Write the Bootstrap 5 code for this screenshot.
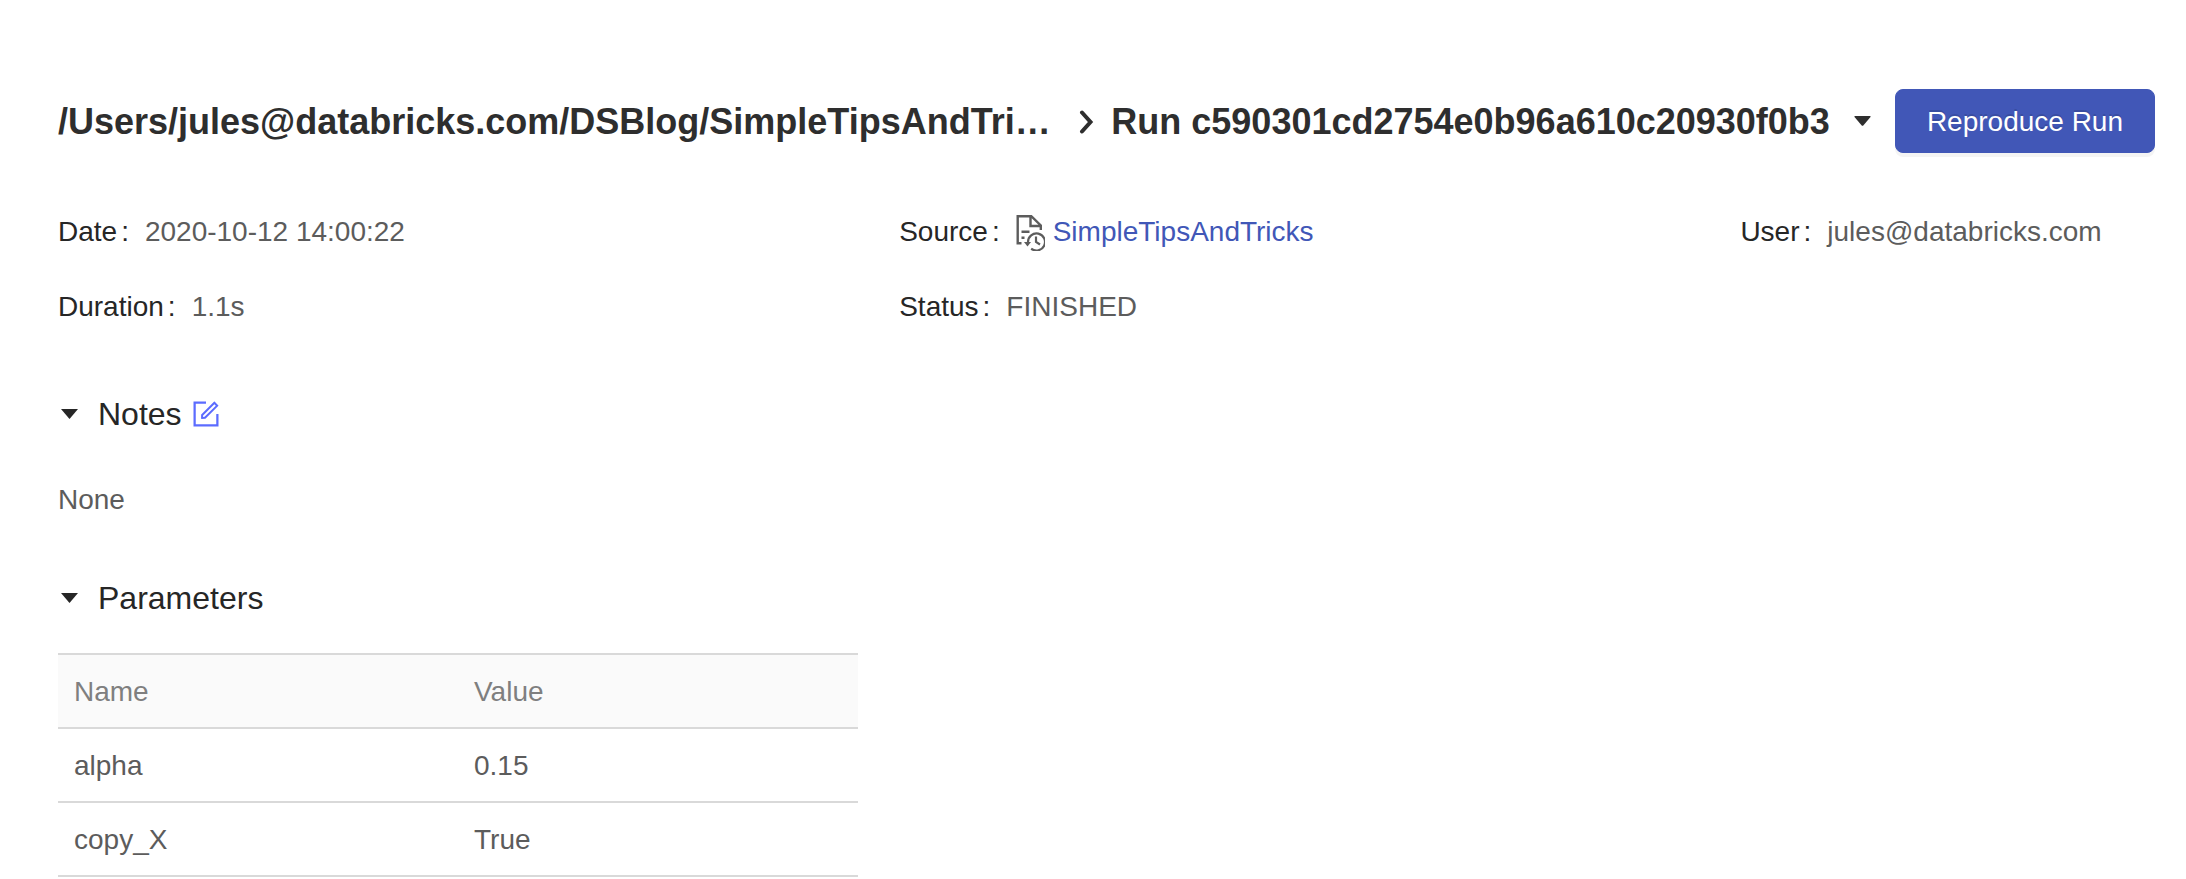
<!DOCTYPE html>
<html lang="en">
<head>
<meta charset="utf-8">
<meta name="viewport" content="width=device-width, initial-scale=1">
<title>Run c590301cd2754e0b96a610c20930f0b3</title>
<link href="https://cdn.jsdelivr.net/npm/bootstrap@5.3.0/dist/css/bootstrap.min.css" rel="stylesheet">
<style>
  body { font-family: "Liberation Sans", Arial, sans-serif; font-size: 28px; line-height: 42px; color: #5c5c5c; background: #fff; }
  .run-page { padding: 89px 31px 0 58px; }
  .run-title { font-size: 36px; line-height: 54px; font-weight: 700; color: #2e2e2e; padding-top: 2px; }
  .run-path { color: inherit; text-decoration: none; min-width: 0; flex: 1 1 0; }
  .chevron { margin: 0 17px 0 24px; }
  .menu-toggle { padding: 0 24px; border: 0; background: none; color: #2e2e2e; line-height: 0; }
  .btn-reproduce { --bs-btn-color: #fff; --bs-btn-bg: #4157b7; --bs-btn-border-color: #4157b7; --bs-btn-hover-color: #fff; --bs-btn-hover-bg: #364aa3; --bs-btn-hover-border-color: #364aa3;
    --bs-btn-font-size: 28px; --bs-btn-line-height: 42px; --bs-btn-padding-x: 31px; --bs-btn-border-radius: 8px;
    padding-top: 11px; padding-bottom: 9px;
    text-shadow: 0 -2px 0 rgba(0,0,0,.12); box-shadow: 0 4px 0 rgba(0,0,0,.045); }
  .run-meta { display: grid; grid-template-columns: 2fr 2fr 1fr; gap: 33px 12px; margin: 58px 0 0; }
  .run-meta dt { font-weight: 400; color: #262626; }
  .run-meta dt::after { content: ":"; margin: 0 16px 0 4px; }
  .run-meta dd { margin: 0; white-space: nowrap; }
  .source-link { color: #4157b7; text-decoration: none; }
  .section-title { font-size: 32px; line-height: 48px; font-weight: 400; color: #262626; margin: 0; }
  .fold { padding: 0 20px 0 3px; border: 0; background: none; color: #262626; line-height: 0; }
  .edit-note { padding: 0; border: 0; background: none; color: #5c6cff; line-height: 0; margin-left: 10px; }
  .notes-section { margin-top: 62px; }
  .notes-body { margin: 41px 0 0; }
  .params-section { margin-top: 53px; }
  .params-table { max-width: 800px; table-layout: fixed; margin: 31px 0 0; color: #5c5c5c; border-color: #d9d9d9; --bs-table-color: #5c5c5c; }
  .params-table > :not(caption) > * > * { padding: 16px 16px 14px; border: 0 solid #d9d9d9; border-bottom-width: 2px; }
  .params-table > thead > tr > th { font-weight: 400; color: #7f7f7f; background: #fafafa; border-top-width: 2px; }
</style>
</head>
<body>
<main class="run-page">
  <header class="d-flex align-items-center">
    <h1 class="run-title d-flex align-items-center flex-fill m-0 text-nowrap overflow-hidden">
      <a class="run-path text-truncate" href="#">/Users/jules@databricks.com/DSBlog/SimpleTipsAndTri…</a>
      <svg class="chevron flex-shrink-0" width="15" height="24" viewBox="0 0 15 24" fill="none" stroke="currentColor" stroke-width="4" aria-hidden="true"><path d="M3 2.500l8.500 9.500L3 21.500" stroke-linecap="round"/></svg>
      <span>Run c590301cd2754e0b96a610c20930f0b3</span>
    </h1>
    <button class="menu-toggle" type="button" aria-label="Run actions"><svg width="17" height="10" viewBox="0 0 17 10" fill="currentColor"><path d="M1 0h15q1 0 .5 1L9.500 9.300q-1 1-2 0L.5 1Q0 0 1 0z"/></svg></button>
    <button class="btn btn-reproduce flex-shrink-0" type="button">Reproduce Run</button>
  </header>

  <dl class="run-meta">
    <div class="d-flex"><dt>Date</dt><dd>2020-10-12 14:00:22</dd></div>
    <div class="d-flex"><dt>Source</dt><dd class="d-flex align-items-center">
      <svg class="me-2" width="29" height="38" viewBox="0 0 29 38" fill="none" stroke="#5c5c5c" stroke-width="2.400" aria-hidden="true">
        <path d="M5.500 30.200H1.700V3.200h13.600l9.500 9.300v4.500M14.500 3.200v9.800h10.300M5.500 18.700h8M5.500 24.700h3"/>
        <path d="M12 29a8.500 8.500 0 1 1 3.200 6.600M20 23.500v5.500l4 2.500" stroke-width="2.200"/>
        <path d="M8 29h7l-3.500 4.500z" fill="#5c5c5c" stroke="none"/>
      </svg><a class="source-link" href="#">SimpleTipsAndTricks</a></dd></div>
    <div class="d-flex"><dt>User</dt><dd>jules@databricks.com</dd></div>
    <div class="d-flex"><dt>Duration</dt><dd>1.1s</dd></div>
    <div class="d-flex"><dt>Status</dt><dd>FINISHED</dd></div>
  </dl>

  <section class="notes-section">
    <div class="d-flex align-items-center">
      <button class="fold" type="button" aria-label="Collapse notes"><svg width="17" height="10" viewBox="0 0 17 10" fill="currentColor"><path d="M0 0h17L8.500 10z"/></svg></button>
      <h2 class="section-title">Notes</h2>
      <button class="edit-note" type="button" aria-label="Edit notes"><svg width="28" height="28" viewBox="64 64 896 896" fill="currentColor"><path d="M904 512h-56c-4.400 0-8 3.600-8 8v320H184V184h320c4.400 0 8-3.600 8-8v-64H112v800h800V520c0-4.400-3.600-8-8-8z"/><path d="M355.900 534.900L354 653.800c-.1 8.900 7.100 16.200 16 16.200h.4l118-2.900c2-.1 4-.9 5.400-2.300l415.900-415c3.100-3.100 3.100-8.200 0-11.300L785.400 114.300c-1.600-1.600-3.600-2.300-5.700-2.300s-4.100.8-5.700 2.300l-415.800 415a8.300 8.300 0 0 0-2.300 5.600zm63.500 23.600L779.700 199l45.200 45.100-360.500 359.700-45.700 1.100.7-46.400z"/></svg></button>
    </div>
    <p class="notes-body">None</p>
  </section>

  <section class="params-section">
    <div class="d-flex align-items-center">
      <button class="fold" type="button" aria-label="Collapse parameters"><svg width="17" height="10" viewBox="0 0 17 10" fill="currentColor"><path d="M0 0h17L8.500 10z"/></svg></button>
      <h2 class="section-title">Parameters</h2>
    </div>
    <table class="table params-table">
      <thead><tr><th scope="col">Name</th><th scope="col">Value</th></tr></thead>
      <tbody>
        <tr><td>alpha</td><td>0.15</td></tr>
        <tr><td>copy_X</td><td>True</td></tr>
      </tbody>
    </table>
  </section>
</main>
<script src="https://cdn.jsdelivr.net/npm/bootstrap@5.3.0/dist/js/bootstrap.bundle.min.js"></script>
</body>
</html>
